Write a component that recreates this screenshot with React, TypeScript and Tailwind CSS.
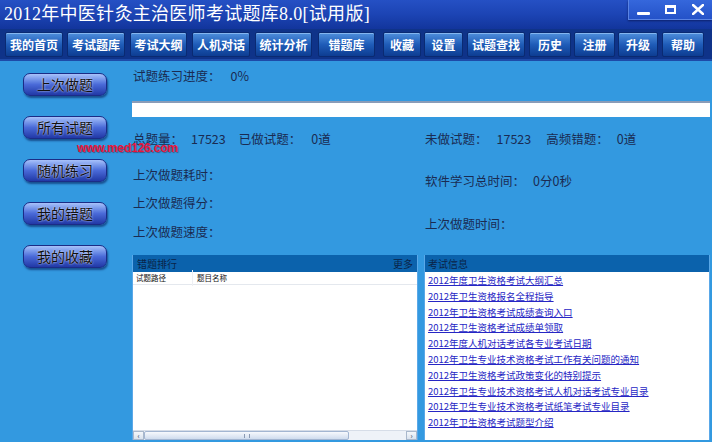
import React from "react";

const menu = [
  { t: "我的首页", c: "ml-[5px] w-[58px]" },
  { t: "考试题库", c: "ml-[4px] w-[58px]" },
  { t: "考试大纲", c: "ml-[5px] w-[57px]" },
  { t: "人机对话", c: "ml-[5px] w-[58px]" },
  { t: "统计分析", c: "ml-[5px] w-[57px]" },
  { t: "错题库", c: "ml-[6px] w-[57px]" },
  { t: "收藏", c: "ml-[8px] w-[38px]" },
  { t: "设置", c: "ml-[3px] w-[39px]" },
  { t: "试题查找", c: "ml-[4px] w-[58px]" },
  { t: "历史", c: "ml-[4px] w-[42px]" },
  { t: "注册", c: "ml-[3px] w-[41px]" },
  { t: "升级", c: "ml-[3px] w-[40px]" },
  { t: "帮助", c: "ml-[4px] w-[42px]" },
];

const sideButtons = ["上次做题", "所有试题", "随机练习", "我的错题", "我的收藏"];

const news = [
  "2012年度卫生资格考试大纲汇总",
  "2012年卫生资格报名全程指导",
  "2012年卫生资格考试成绩查询入口",
  "2012年卫生资格考试成绩单领取",
  "2012年度人机对话考试各专业考试日期",
  "2012年卫生专业技术资格考试工作有关问题的通知",
  "2012年卫生资格考试政策变化的特别提示",
  "2012年卫生专业技术资格考试人机对话考试专业目录",
  "2012年卫生专业技术资格考试纸笔考试专业目录",
  "2012年卫生资格考试题型介绍",
];

const font = "font-['Noto_Sans_CJK_SC',sans-serif]";

const Stat: React.FC<{ label: string; value?: string; gap?: string }> = ({
  label,
  value,
  gap = "ml-[14px]",
}) => (
  <span className="inline-flex">
    <span>{label}</span>
    {value != null && <span className={gap}>{value}</span>}
  </span>
);

const App: React.FC = () => {
  return (
    <div
      className={`relative w-[712px] h-[442px] overflow-hidden flex flex-col bg-[#3399e0] ${font}`}
    >
      {/* 标题栏 */}
      <div className="h-[29px] flex-none flex justify-between bg-gradient-to-b from-[#2550c4] via-[#1c44b4] to-[#12359c]">
        <div className="pl-[4px] pt-[2px] text-[18px] leading-[24px] text-white font-['Liberation_Serif','Noto_Sans_CJK_SC',serif] tracking-[0.3px]">
          2012年中医针灸主治医师考试题库8.0[试用版]
        </div>
        <div className="w-[84px] h-[20px] flex items-center justify-around bg-gradient-to-b from-[#3567dc] to-[#2452c8] border-l border-b border-[#5a84e4] shadow-[0_1px_2px_rgba(0,0,40,0.5)]">
          <div className="w-[13px] h-[3px] mt-[8px] bg-white rounded-[1px]" />
          <div className="w-[11px] h-[9px] border-[2px] border-white border-t-[3px]" />
          <svg width="12" height="11" viewBox="0 0 12 11">
            <path d="M1 1 L11 10 M11 1 L1 10" stroke="white" strokeWidth="2.4" strokeLinecap="round" />
          </svg>
        </div>
      </div>

      {/* 菜单栏 */}
      <div className="h-[32px] flex-none flex pt-[3px] bg-[#0f3389] border-b-[2px] border-[#1d4aa8]">
        {menu.map((m) => (
          <div
            key={m.t}
            className={`${m.c} h-[25px] flex items-center justify-center rounded-[2px] bg-gradient-to-b from-[#4f8fdc] via-[#1f5cb8] to-[#0d3d92] border border-[#0a2a72] shadow-[inset_0_1px_0_rgba(170,210,255,0.6)] text-white text-[12px] font-bold`}
          >
            {m.t}
          </div>
        ))}
      </div>

      {/* 主体 */}
      <div className="flex-1 flex min-h-0">
        <div className="w-[132px] flex-none flex flex-col gap-[20px] pt-[12px] pl-[23px]">
          {sideButtons.map((b) => (
            <div
              key={b}
              className="w-[84px] h-[23px] flex items-center justify-center rounded-[7px] bg-gradient-to-b from-[#a8c2fa] via-[#4a6ad8] to-[#2238a6] border border-[#1b2c86] shadow-[1px_2px_2px_rgba(0,20,80,0.55)] text-[14px] text-[#101010] [text-shadow:0_0_2px_#ffffff]"
            >
              {b}
            </div>
          ))}
        </div>

        <div className="flex-1 flex flex-col text-[12.5px] text-[#1a2b52] leading-[16px]">
          <div className="pt-[7px] pl-[1px] flex">
            <span>试题练习进度：</span>
            <span className="ml-[10px]">0%</span>
          </div>
          <div className="mt-[17px] w-[578px] h-[16px] bg-white border-t-[2px] border-[#8a9cb8]" />

          <div className="flex mt-[14px]">
            <div className="w-[293px] flex flex-col pl-[1px]">
              <div className="flex">
                <Stat label="总题量：" value="17523" gap="ml-[8px]" />
                <span className="ml-[13px]">
                  <Stat label="已做试题：" value="0道" gap="ml-[10px]" />
                </span>
              </div>
              <div className="mt-[20px]">上次做题耗时：</div>
              <div className="mt-[12px]">上次做题得分：</div>
              <div className="mt-[13px]">上次做题速度：</div>
            </div>
            <div className="flex flex-col">
              <div className="flex">
                <Stat label="未做试题：" value="17523" gap="ml-[9px]" />
                <span className="ml-[15px]">
                  <Stat label="高频错题：" value="0道" gap="ml-[8px]" />
                </span>
              </div>
              <div className="mt-[26px]">
                <Stat label="软件学习总时间：" value="0分0秒" gap="ml-[8px]" />
              </div>
              <div className="mt-[27px]">上次做题时间：</div>
            </div>
          </div>

          {/* 下方面板 */}
          <div className="mt-auto mb-[2px] flex gap-[6px] h-[185px]">
            <div className="w-[286px] flex flex-col bg-white border-x border-[#5aa8e8]">
              <div className="h-[17px] flex-none flex items-center justify-between px-[4px] bg-[#0b62ac] text-[10px] text-[#0a2448]">
                <span>错题排行</span>
                <span>更多</span>
              </div>
              <div className="h-[13px] flex-none flex items-center text-[7.5px] text-[#111] border-b border-[#e4e8ee]">
                <span className="w-[60px] pl-[3px] border-r border-[#eef0f4]">试题路径</span>
                <span className="pl-[4px]">题目名称</span>
              </div>
              <div className="flex-1" />
              <div className="h-[10px] flex-none flex items-stretch bg-[#eef2f8] border-t border-[#d6dde8]">
                <div className="w-[11px] flex items-center justify-center bg-gradient-to-b from-[#f4f7fb] to-[#d9e2ee] border border-[#a9b8cc] text-[7px] leading-none text-[#203050]">‹</div>
                <div className="w-[205px] flex items-center justify-center bg-gradient-to-b from-[#f7f9fd] to-[#cfdcee] border border-[#a3b6d2] rounded-[2px]">
                  <div className="w-[6px] h-[4px] border-x border-[#8a9ab4]" />
                </div>
                <div className="flex-1" />
                <div className="w-[11px] flex items-center justify-center bg-gradient-to-b from-[#f4f7fb] to-[#d9e2ee] border border-[#a9b8cc] text-[7px] leading-none text-[#203050]">›</div>
              </div>
            </div>

            <div className="w-[286px] flex flex-col bg-white border-x border-[#5aa8e8]">
              <div className="h-[17px] flex-none flex items-center px-[3px] bg-[#0b62ac] text-[10px] text-[#0a2448]">
                <span>考试信息</span>
              </div>
              <div className="pt-[1px] pl-[3px] flex flex-col">
                {news.map((n) => (
                  <div
                    key={n}
                    className="h-[15.8px] leading-[15.8px] text-[9.5px] text-[#2626c4] underline underline-offset-[1px] whitespace-nowrap"
                  >
                    {n}
                  </div>
                ))}
              </div>
            </div>
          </div>
        </div>
      </div>

      {/* 水印 */}
      <div className="absolute left-[77px] top-[139px] text-[12px] font-bold text-[#e8163c] font-['Liberation_Sans',sans-serif] [text-shadow:1px_1px_1px_rgba(80,0,20,0.45)] tracking-[-0.2px]">
        www.med126.com
      </div>
    </div>
  );
};

export default App;
